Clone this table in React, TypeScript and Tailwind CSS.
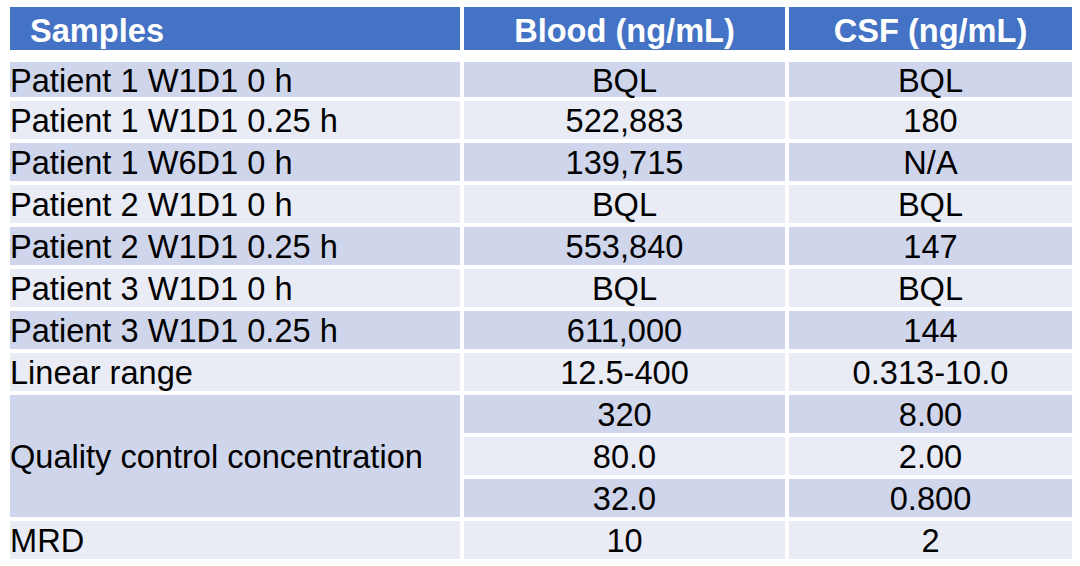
const rows: { label: string; blood: string; csf: string }[] = [
  { label: "Patient 1 W1D1 0 h", blood: "BQL", csf: "BQL" },
  { label: "Patient 1 W1D1 0.25 h", blood: "522,883", csf: "180" },
  { label: "Patient 1 W6D1 0 h", blood: "139,715", csf: "N/A" },
  { label: "Patient 2 W1D1 0 h", blood: "BQL", csf: "BQL" },
  { label: "Patient 2 W1D1 0.25 h", blood: "553,840", csf: "147" },
  { label: "Patient 3 W1D1 0 h", blood: "BQL", csf: "BQL" },
  { label: "Patient 3 W1D1 0.25 h", blood: "611,000", csf: "144" },
  { label: "Linear range", blood: "12.5-400", csf: "0.313-10.0" },
];

const qc = [
  { blood: "320", csf: "8.00" },
  { blood: "80.0", csf: "2.00" },
  { blood: "32.0", csf: "0.800" },
];

const dark = "bg-[#cfd5ea]";
const light = "bg-[#e9ebf5]";

function Cell({ children, tone, center }: { children: React.ReactNode; tone: string; center?: boolean }) {
  return (
    <div className={`${tone} flex items-center pt-[3px] leading-none ${center ? "justify-center" : ""}`}>
      {children}
    </div>
  );
}

export default function App() {
  return (
    <div
      className="h-[566px] w-[1080px] overflow-hidden bg-white pt-[7px] pl-[10px] text-[32.6px] text-black"
      style={{ fontFamily: '"Liberation Sans", Arial, sans-serif' }}
    >
      {/* Header */}
      <div className="grid h-[43px] grid-cols-[450px_321px_283px] gap-x-[4px] font-bold text-white">
        <div className="flex items-center bg-[#4472c4] pt-[6px] pl-[20px] leading-none">Samples</div>
        <div className="flex items-center justify-center bg-[#4472c4] pt-[6px] leading-none">Blood (ng/mL)</div>
        <div className="flex items-center justify-center bg-[#4472c4] pt-[6px] leading-none">CSF (ng/mL)</div>
      </div>

      {/* Body */}
      <div className="mt-[12px] grid grid-cols-[450px_321px_283px] grid-rows-[35px_repeat(11,38px)] gap-[4px]">
        {rows.map((r, i) => {
          const tone = i % 2 === 0 ? dark : light;
          return [
            <Cell key={`${i}-a`} tone={tone}>{r.label}</Cell>,
            <Cell key={`${i}-b`} tone={tone} center>{r.blood}</Cell>,
            <Cell key={`${i}-c`} tone={tone} center>{r.csf}</Cell>,
          ];
        })}

        <div className={`${dark} row-span-3 flex items-center pt-[3px] leading-none`}>Quality control concentration</div>
        {qc.map((q, i) => {
          const tone = i % 2 === 0 ? dark : light;
          return [
            <Cell key={`qc${i}-b`} tone={tone} center>{q.blood}</Cell>,
            <Cell key={`qc${i}-c`} tone={tone} center>{q.csf}</Cell>,
          ];
        })}

        <Cell tone={light}>MRD</Cell>
        <Cell tone={light} center>10</Cell>
        <Cell tone={light} center>2</Cell>
      </div>
    </div>
  );
}
